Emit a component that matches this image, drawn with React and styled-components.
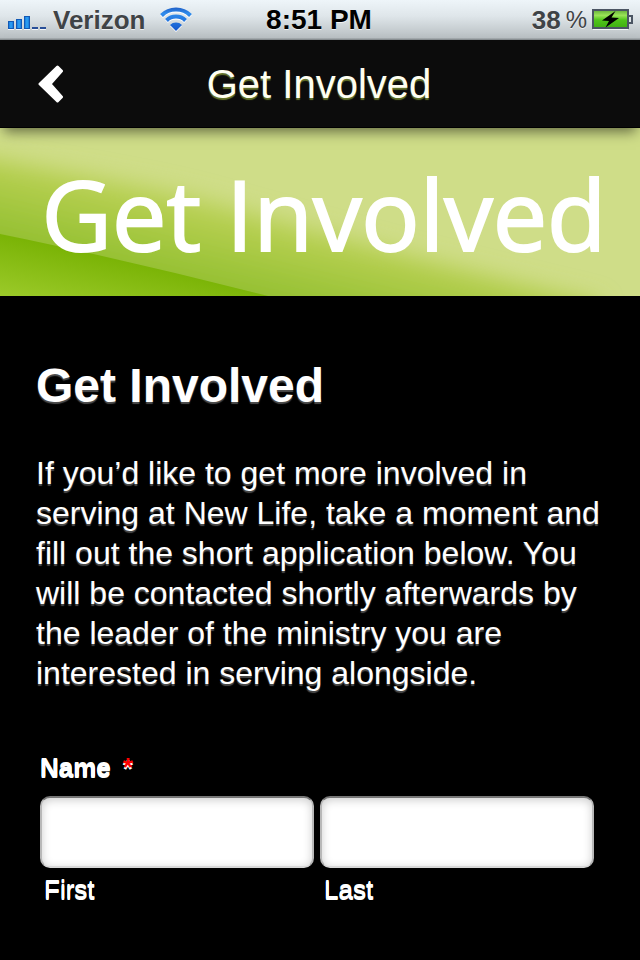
import React from "react";
import styled, { createGlobalStyle } from "styled-components";

const sans = '"Liberation Sans", Arial, Helvetica, sans-serif';

const GlobalStyle = createGlobalStyle`
  *, *::before, *::after { box-sizing: border-box; }
  body { margin: 0; background: #000; color: #fff; font-family: ${sans}; }
`;

const Screen = styled.div`
  min-height: 100vh;
  display: flex;
  flex-direction: column;
  background: #000;
`;

const StatusBar = styled.div`
  display: grid;
  grid-template-columns: 1fr auto 1fr;
  align-items: center;
  height: 40px;
  padding: 0 6px 0 8px;
  background: linear-gradient(#eef5f9 0, #dfe6ea 40%, #b9c0c3 94%, #7d8386 100%);
  color: #3f4346;
  font-weight: bold;
  font-size: 26px;
  line-height: 40px;
  text-shadow: 0 1px 0 rgba(255, 255, 255, 0.7);
`;

const StatusGroup = styled.div`
  display: flex;
  align-items: center;
  justify-content: ${(p) => (p.$end ? "flex-end" : "flex-start")};
  gap: ${(p) => p.$gap}px;
`;

const Carrier = styled.span`
  margin-right: 8px;
`;

const Clock = styled.time`
  padding-right: 4px;
  color: #000;
  font-size: 28px;
`;

const Percent = styled.span`
  font-size: 24px;
  font-weight: normal;
`;

const Header = styled.header`
  position: relative;
  z-index: 1;
  display: grid;
  grid-template-columns: 102px 1fr 104px;
  align-items: center;
  height: 88px;
  background: #0c0c0c;
  border-bottom: 1px solid #000;
  box-shadow: 0 8px 12px -4px rgba(0, 0, 0, 0.5);
`;

const BackButton = styled.button`
  display: flex;
  align-items: center;
  justify-content: center;
  height: 80px;
  padding: 0;
  border: 0;
  background: none;
  cursor: pointer;
`;

const Title = styled.div`
  text-align: center;
  font-size: 40px;
  line-height: 48px;
  color: #fffff2;
  text-shadow: 0 2px 1px #66752c;
`;

const Banner = styled.div`
  display: grid;
  height: 168px;
  overflow: hidden;
  background: #cfdd88;

  & > * { grid-area: 1 / 1; }
`;

const BannerArt = styled.svg`
  width: 100%;
  height: 168px;
`;

const BannerText = styled.div`
  z-index: 0;
  padding-left: 8px;
  text-align: center;
  white-space: nowrap;
  font-family: "Open Sans", "Trebuchet MS", sans-serif;
  font-size: 97px;
  line-height: 170px;
  color: #fff;
  -webkit-text-stroke: 2px #fff;
`;

const Content = styled.main`
  padding: 62px 36px 40px;
  text-shadow: 0 2px 1px rgba(255, 255, 255, 0.3);
`;

const Heading = styled.h1`
  margin: 0 0 39px;
  font-size: 48px;
  line-height: 56px;
`;

const Intro = styled.p`
  margin: 0 0 58px;
  font-size: 32px;
  line-height: 40px;
`;

const NameGroup = styled.fieldset`
  margin: 0;
  padding: 0 10px 0 4px;
  border: 0;
  font-size: 26px;
  line-height: 32px;
  text-shadow: 0 1px 0 #fff, 0 2px 0 #fff;
`;

const Legend = styled.legend`
  padding: 0;
  margin-bottom: 13px;
  font-weight: bold;
`;

const Required = styled.span`
  margin-left: 12px;
  color: #f00;
  text-shadow: 0 2px 0 #fff;
`;

const Fields = styled.div`
  display: grid;
  grid-template-columns: 1fr 1fr;
  gap: 6px;
`;

const Field = styled.div`
  display: flex;
  flex-direction: column;
  gap: 5px;
`;

const TextInput = styled.input`
  width: 100%;
  height: 72px;
  padding: 0 12px;
  border: 2px solid;
  border-color: #777 #b8b8b8 #d8d8d8;
  border-radius: 10px;
  background: #fff;
  box-shadow: inset 0 2px 10px rgba(0, 0, 0, 0.2);
  font: 32px ${sans};
`;

const FieldLabel = styled.label`
  padding-left: 4px;
`;

function SignalIcon() {
  return (
    <svg width="39" height="20" viewBox="0 0 39 20" aria-label="Signal">
      <defs>
        <linearGradient id="bars" x1="0" y1="0" x2="1" y2="0">
          <stop offset="0" stopColor="#1271d8" />
          <stop offset="0.5" stopColor="#2fa4f5" />
          <stop offset="1" stopColor="#1271d8" />
        </linearGradient>
      </defs>
      <path d="M0 19.5h6M8 19.5h6M16 19.5h6M24 19.5h6M32 19.5h6" stroke="#fff" opacity=".8" />
      <g fill="url(#bars)" stroke="#1259b5">
        <rect x="0.5" y="11.5" width="5" height="7" />
        <rect x="8.5" y="9.5" width="5" height="9" />
        <rect x="16.5" y="6.5" width="5" height="12" />
      </g>
      <path d="M24 18h6M32 18h6" stroke="#284f98" strokeWidth="2" />
    </svg>
  );
}

function WifiIcon() {
  return (
    <svg width="34" height="26" viewBox="0 0 34 26" aria-label="Wi-Fi">
      <defs>
        <linearGradient id="wifi" x1="0" y1="0" x2="0" y2="26" gradientUnits="userSpaceOnUse">
          <stop offset="0" stopColor="#1f5cc4" />
          <stop offset="0.25" stopColor="#2f8cec" />
          <stop offset="1" stopColor="#0f50c8" />
        </linearGradient>
      </defs>
      <g fill="none" stroke="#fff" strokeWidth="4" transform="translate(0 1)">
        <path d="M2.5 8.5a20.5 20.5 0 0 1 29 0M7.5 13.5a13.5 13.5 0 0 1 19 0" />
        <path d="M17 24l-6-6a8.5 8.5 0 0 1 12 0z" fill="#fff" stroke="none" />
      </g>
      <g fill="none" stroke="url(#wifi)" strokeWidth="4">
        <path d="M2.5 8.5a20.5 20.5 0 0 1 29 0M7.5 13.5a13.5 13.5 0 0 1 19 0" />
        <path d="M17 24l-6-6a8.5 8.5 0 0 1 12 0z" fill="url(#wifi)" stroke="none" />
      </g>
    </svg>
  );
}

function BatteryIcon() {
  return (
    <svg width="42" height="22" viewBox="0 0 42 22" aria-label="Charging">
      <defs>
        <linearGradient id="charge" x1="0" y1="0" x2="0" y2="1">
          <stop offset="0" stopColor="#62ad38" />
          <stop offset="0.3" stopColor="#9be458" />
          <stop offset="0.55" stopColor="#50c51a" />
          <stop offset="1" stopColor="#3fae12" />
        </linearGradient>
      </defs>
      <path d="M1 20.5h35" stroke="#fff" opacity=".8" />
      <rect x="1" y="1" width="35" height="18" fill="url(#charge)" stroke="#4b5563" strokeWidth="2" />
      <path d="M37 7h3v7h-3" fill="#dfe5e8" stroke="#4b5563" strokeWidth="2" />
      <path d="M23.5 2L10 11.5l7 .5-3.500 6.500L27 9l-7.500-.5z" fill="#000" />
    </svg>
  );
}

function BackIcon() {
  return (
    <svg width="26" height="38" viewBox="0 0 26 38" aria-hidden="true">
      <path
        d="M19.5 2L2 19l17.5 17 4-4L12 19 23.5 6z"
        fill="#fff"
        stroke="#fff"
        strokeWidth="3"
        strokeLinejoin="round"
      />
    </svg>
  );
}

function BannerBackground() {
  return (
    <BannerArt viewBox="0 0 640 168" preserveAspectRatio="none" aria-hidden="true">
      <defs>
        <linearGradient id="leaf" x1="175" y1="44" x2="148" y2="160" gradientUnits="userSpaceOnUse">
          <stop offset="0" stopColor="#cbdb7b" />
          <stop offset="0.3" stopColor="#b6cf50" />
          <stop offset="0.75" stopColor="#9ac337" />
          <stop offset="1" stopColor="#8fbc2b" />
        </linearGradient>
        <linearGradient id="deep" x1="110" y1="120" x2="96" y2="186" gradientUnits="userSpaceOnUse">
          <stop offset="0" stopColor="#75b000" />
          <stop offset="1" stopColor="#9ac928" />
        </linearGradient>
        <filter id="soft" x="-20%" y="-30%" width="140%" height="160%">
          <feGaussianBlur stdDeviation="11" />
        </filter>
      </defs>
      <rect width="640" height="168" fill="#cfdd88" />
      <path
        d="M-60 20C60 44 150 54 230 78C330 106 430 134 600 174L600 220H-60z"
        fill="url(#leaf)"
        filter="url(#soft)"
      />
      <path d="M0 106C90 124 180 146 268 168H0z" fill="url(#deep)" />
    </BannerArt>
  );
}

export default function App() {
  return (
    <Screen>
      <GlobalStyle />
      <StatusBar>
        <StatusGroup $gap={6}>
          <SignalIcon />
          <Carrier>Verizon</Carrier>
          <WifiIcon />
        </StatusGroup>
        <Clock>8:51 PM</Clock>
        <StatusGroup $end $gap={5}>
          <span>38</span>
          <Percent>%</Percent>
          <BatteryIcon />
        </StatusGroup>
      </StatusBar>
      <Header>
        <BackButton type="button" aria-label="Back">
          <BackIcon />
        </BackButton>
        <Title>Get Involved</Title>
      </Header>
      <Banner>
        <BannerBackground />
        <BannerText>Get Involved</BannerText>
      </Banner>
      <Content>
        <Heading>Get Involved</Heading>
        <Intro>
          If you’d like to get more involved in serving at New Life, take a moment and fill out
          the short application below. You will be contacted shortly afterwards by the leader of
          the ministry you are interested in serving alongside.
        </Intro>
        <NameGroup>
          <Legend>
            Name<Required>*</Required>
          </Legend>
          <Fields>
            <Field>
              <TextInput id="first-name" type="text" required />
              <FieldLabel htmlFor="first-name">First</FieldLabel>
            </Field>
            <Field>
              <TextInput id="last-name" type="text" required />
              <FieldLabel htmlFor="last-name">Last</FieldLabel>
            </Field>
          </Fields>
        </NameGroup>
      </Content>
    </Screen>
  );
}
